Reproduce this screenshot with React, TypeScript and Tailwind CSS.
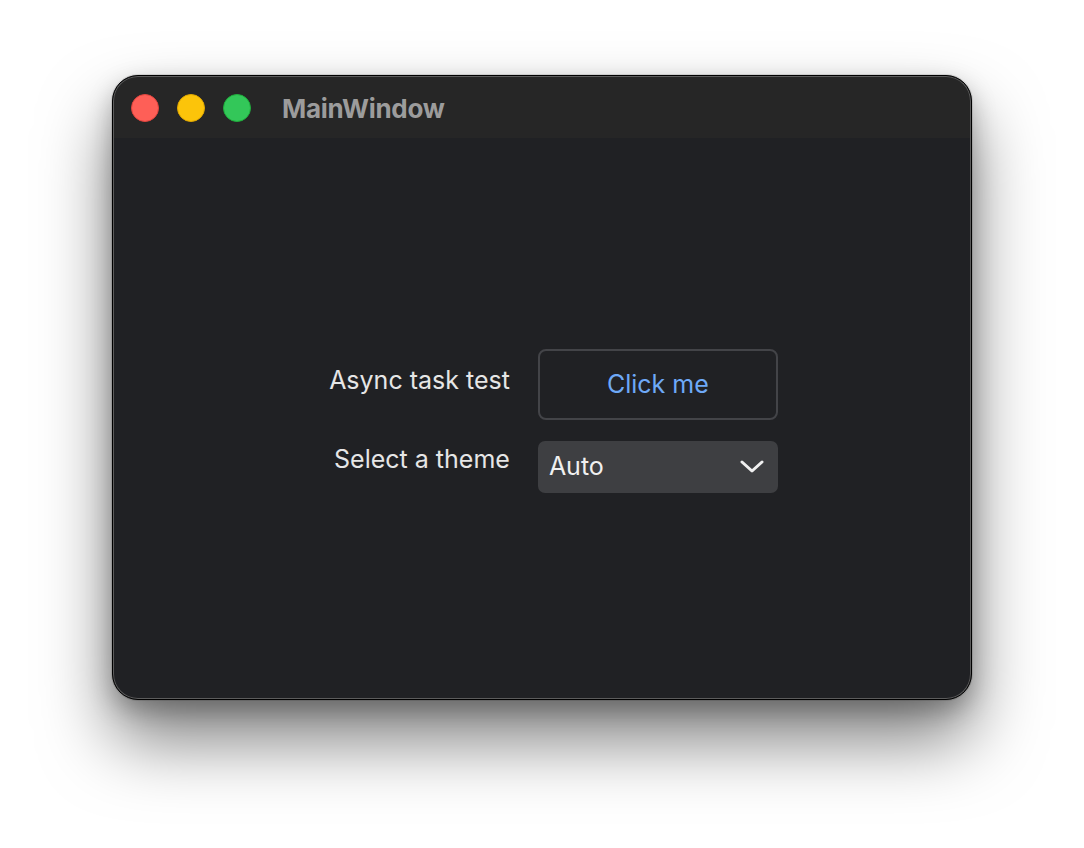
import React from "react";

function TrafficLights() {
  return (
    <div className="flex items-center gap-[18px]">
      <span className="h-[28px] w-[28px] rounded-full bg-[#fe5f57] border border-[#e0443e]"></span>
      <span className="h-[28px] w-[28px] rounded-full bg-[#fcc40a] border border-[#e0a800]"></span>
      <span className="h-[28px] w-[28px] rounded-full bg-[#33c759] border border-[#1fae3c]"></span>
    </div>
  );
}

function App() {
  return (
    <div
      className="w-[1084px] h-[848px] bg-white pt-[75px] pl-[112px]"
      style={{ fontFamily: "Inter, 'Noto Sans', sans-serif" }}
    >
      <div className="w-[860px] h-[625px] flex flex-col rounded-[26px] overflow-hidden border border-black bg-[#202124] shadow-[0_0_0_1px_rgba(0,0,0,0.1),0_40px_70px_rgba(0,0,0,0.5),0_10px_25px_rgba(0,0,0,0.25)]">
        <div className="h-[62px] flex items-center pl-[17px] bg-[#262626] rounded-t-[25px] border-t border-x border-[#5c5c5c]">
          <TrafficLights />
          <h1 className="ml-[31px] mt-[2px] text-[26px] font-bold text-[#9c9c9c] tracking-[-0.3px]">MainWindow</h1>
        </div>
        <div className="flex-1 flex items-center justify-center pl-[23px] pt-[5px] border-b border-x border-[#5c5c5c] rounded-b-[25px]">
          <div className="grid grid-cols-[auto_240px] gap-x-[28px] gap-y-[21px] items-center">
            <label className="text-right text-[25px] text-[#e6e6e6] mb-[6px]">Async task test</label>
            <button className="h-[71px] rounded-[8px] border-2 border-[#434448] text-[25px] text-[#6ea9f7] pt-[2px]">
              Click me
            </button>
            <label className="text-right text-[25px] text-[#e6e6e6] mb-[14px]">Select a theme</label>
            <div className="h-[52px] rounded-[7px] bg-[#3e3f42] flex items-center justify-between pl-[11px] pr-[14px]">
              <span className="text-[25px] text-[#f0f0f0]">Auto</span>
              <svg width="24" height="14" viewBox="0 0 24 14" fill="none">
                <path d="M2 2 L12 11 L22 2" stroke="#f0f0f0" strokeWidth="3" strokeLinecap="round" strokeLinejoin="round" />
              </svg>
            </div>
          </div>
        </div>
      </div>
    </div>
  );
}

export default App;
